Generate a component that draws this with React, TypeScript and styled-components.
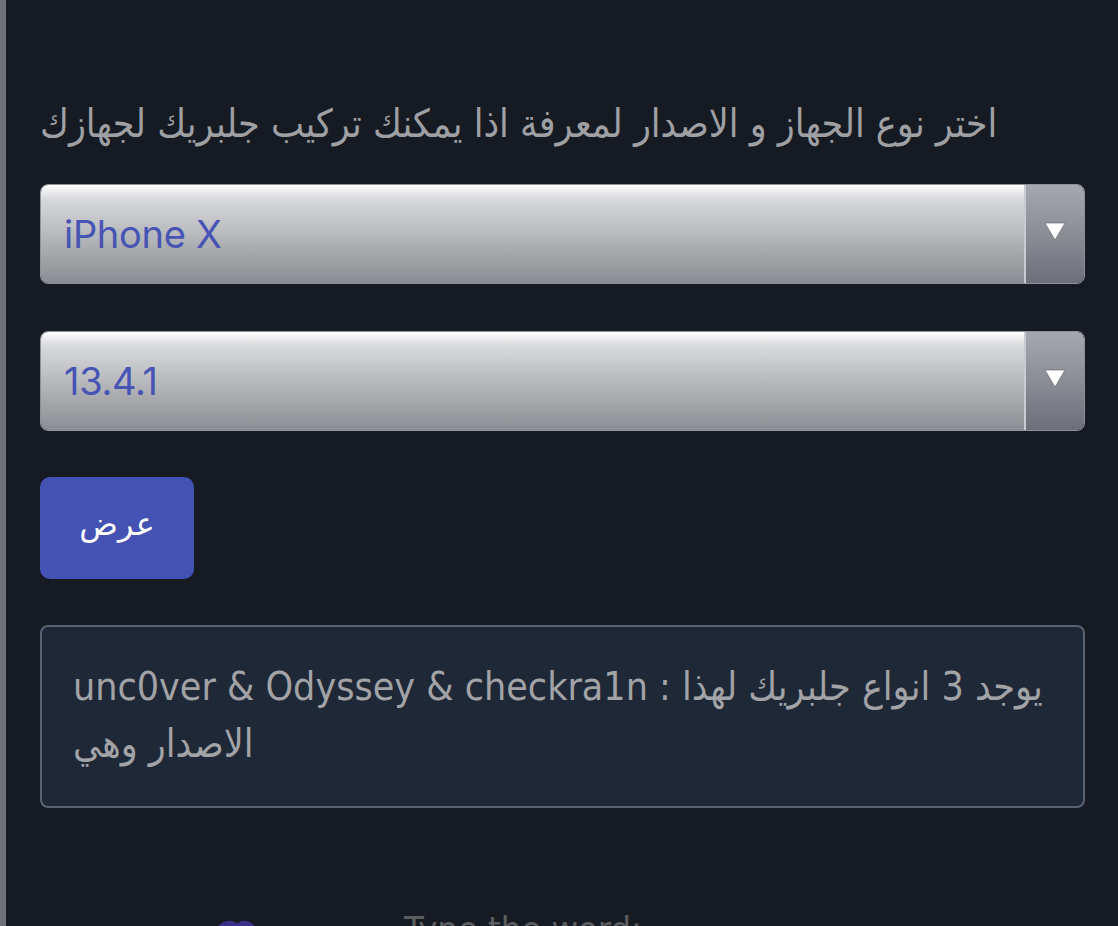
import React from "react";
import styled, { createGlobalStyle } from "styled-components";

const Global = createGlobalStyle`
  html, body { margin: 0; padding: 0; background: #161b23; overflow: hidden; }
  body { font-family: "DejaVu Sans Condensed", "DejaVu Sans", sans-serif; }
`;

const Page = styled.div`
  display: flex;
  min-height: 926px;
  background: #161b23;
`;

const SideStrip = styled.div`
  width: 6px;
  flex: none;
  background: #6e7075;
`;

const Main = styled.main`
  flex: 1;
  padding: 102px 33px 0 34px;
  display: flex;
  flex-direction: column;
`;

const Heading = styled.p`
  margin: 0 0 38px;
  font-size: 39px;
  line-height: 44px;
  color: #9fa0a4;
  white-space: nowrap;
`;

const Select = styled.div<{ $gap: number }>`
  display: flex;
  height: 98px;
  border: 1px solid #8f9297;
  border-radius: 8px;
  overflow: hidden;
  margin-bottom: ${(p) => p.$gap}px;
`;

const SelectValue = styled.div`
  flex: 1;
  display: flex;
  align-items: center;
  padding-left: 23px;
  background: linear-gradient(to bottom, #ffffff 0%, #d8d9dc 14%, #b7b9bd 50%, #8b8d92 100%);
  font-family: Inter, "Liberation Sans", sans-serif;
  font-size: 38px;
  letter-spacing: -0.3px;
  color: #4854b4;
`;

const ArrowBox = styled.div`
  width: 60px;
  flex: none;
  display: flex;
  align-items: center;
  justify-content: center;
  padding-bottom: 6px;
  box-sizing: border-box;
  border-left: 2px solid #c9cbce;
  background: linear-gradient(to bottom, #a6a8ae 0%, #8a8d94 50%, #6c6f78 100%);
`;

const Button = styled.button`
  align-self: flex-start;
  width: 154px;
  height: 102px;
  margin-bottom: 46px;
  border: none;
  border-radius: 10px;
  background: #4452b3;
  color: #ffffff;
  font-family: "DejaVu Sans", sans-serif;
  font-size: 32px;
  padding: 0 0 8px;
`;

const ResultBox = styled.div`
  height: 183px;
  box-sizing: border-box;
  border: 2px solid #596272;
  border-radius: 8px;
  background: #1f2837;
  padding: 31px 31px 0;
  font-size: 39px;
  line-height: 57px;
  color: #a2a3a7;
  direction: ltr;
  margin-bottom: 98px;
`;

const Line = styled.div`
  white-space: nowrap;
`;

const CaptchaRow = styled.div`
  display: flex;
  align-items: flex-start;
  gap: 138px;
  padding-left: 166px;
`;

const CaptchaImg = styled.div`
  width: 60px;
  height: 30px;
  margin-top: 12px;
  display: flex;
  align-items: flex-start;
  justify-content: center;
`;

const CaptchaLabel = styled.span`
  margin-top: 6px;
  font-family: "DejaVu Sans Condensed", sans-serif;
  font-size: 36px;
  line-height: 36px;
  color: #5c5d60;
`;

const Arrow = () => (
  <svg width="22" height="19" viewBox="0 0 22 19">
    <path d="M1 1 L21 1 L11 18 Z" fill="#ffffff" stroke="#5a5d64" strokeWidth="0.6" />
  </svg>
);

export default function App() {
  return (
    <>
      <Global />
      <Page>
        <SideStrip />
        <Main>
          <Heading dir="ltr">اختر نوع الجهاز و الاصدار لمعرفة اذا يمكنك تركيب جلبريك لجهازك</Heading>
          <Select $gap={47}>
            <SelectValue>iPhone X</SelectValue>
            <ArrowBox><Arrow /></ArrowBox>
          </Select>
          <Select $gap={46}>
            <SelectValue>13.4.1</SelectValue>
            <ArrowBox><Arrow /></ArrowBox>
          </Select>
          <Button>عرض</Button>
          <ResultBox>
            <Line dir="ltr">unc0ver &amp; Odyssey &amp; checkra1n : يوجد 3 انواع جلبريك لهذا</Line>
            <Line dir="ltr">الاصدار وهي</Line>
          </ResultBox>
          <CaptchaRow>
            <CaptchaImg>
              <svg width="50" height="20" viewBox="0 0 50 20">
                <path d="M4 18 C10 4 22 2 26 10 C30 2 42 4 46 18" fill="none" stroke="#3a2f8a" strokeWidth="5" />
              </svg>
            </CaptchaImg>
            <CaptchaLabel>Type the word:</CaptchaLabel>
          </CaptchaRow>
        </Main>
      </Page>
    </>
  );
}
